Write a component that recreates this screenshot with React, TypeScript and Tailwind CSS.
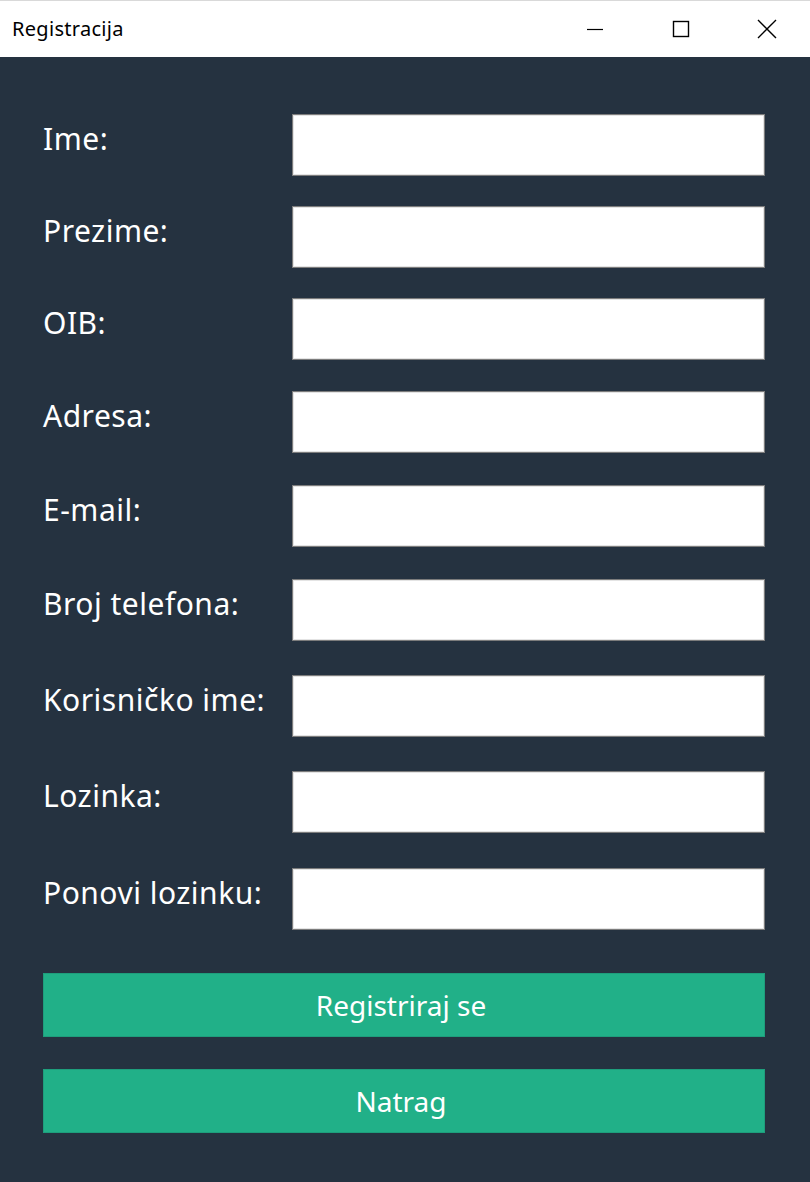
import React from "react";

const fields = [
  { label: "Ime:", mt: "mt-[57px]" },
  { label: "Prezime:", mt: "mt-[30px]" },
  { label: "OIB:", mt: "mt-[30px]" },
  { label: "Adresa:", mt: "mt-[31px]" },
  { label: "E-mail:", mt: "mt-[32px]" },
  { label: "Broj telefona:", mt: "mt-[32px]" },
  { label: "Korisničko ime:", mt: "mt-[34px]" },
  { label: "Lozinka:", mt: "mt-[34px]" },
  { label: "Ponovi lozinku:", mt: "mt-[35px]" },
];

function TitleBar() {
  return (
    <div className="flex h-[57px] items-center border-t border-[#d9d9d9] bg-white">
      <span className="pl-3 text-[20px] leading-none tracking-[0.3px] text-black">Registracija</span>
      <div className="ml-auto flex h-full items-center">
        <button className="flex h-full w-[86px] items-center justify-center">
          <svg width="18" height="18" viewBox="0 0 18 18">
            <line x1="1" y1="9.5" x2="17" y2="9.5" stroke="#000" strokeWidth="1.2" />
          </svg>
        </button>
        <button className="flex h-full w-[86px] items-center justify-center">
          <svg width="18" height="18" viewBox="0 0 18 18">
            <rect x="1.5" y="1.5" width="15" height="15" fill="none" stroke="#000" strokeWidth="1.4" />
          </svg>
        </button>
        <button className="flex h-full w-[86px] items-center justify-center">
          <svg width="20" height="20" viewBox="0 0 20 20">
            <path d="M1 1 L19 19 M19 1 L1 19" stroke="#000" strokeWidth="1.4" />
          </svg>
        </button>
      </div>
    </div>
  );
}

export default function App() {
  return (
    <div
      className="flex h-[1182px] w-[810px] flex-col bg-[#253240]"
      style={{ fontFamily: '"Noto Sans", "Open Sans", sans-serif' }}
    >
      <TitleBar />
      <div className="flex flex-col pl-[43px] pr-[45px]">
        {fields.map((f) => (
          <div key={f.label} className={`flex items-center ${f.mt}`}>
            <label className="w-[249px] shrink-0 pb-[13px] text-[30px] leading-none tracking-[0.5px] text-white">
              {f.label}
            </label>
            <input
              type="text"
              className="h-[62px] flex-1 border border-[#7c7c7c] bg-white shadow-[inset_0_0_0_1px_#e4e4e4] outline-none"
            />
          </div>
        ))}
        <button className="mt-[43px] h-[64px] w-full border border-[#1e9e7c] bg-[#21b088] pr-[6px] text-[28px] text-white">
          Registriraj se
        </button>
        <button className="mt-[32px] h-[64px] w-full border border-[#1e9e7c] bg-[#21b088] pr-[6px] text-[28px] text-white">
          Natrag
        </button>
      </div>
    </div>
  );
}
